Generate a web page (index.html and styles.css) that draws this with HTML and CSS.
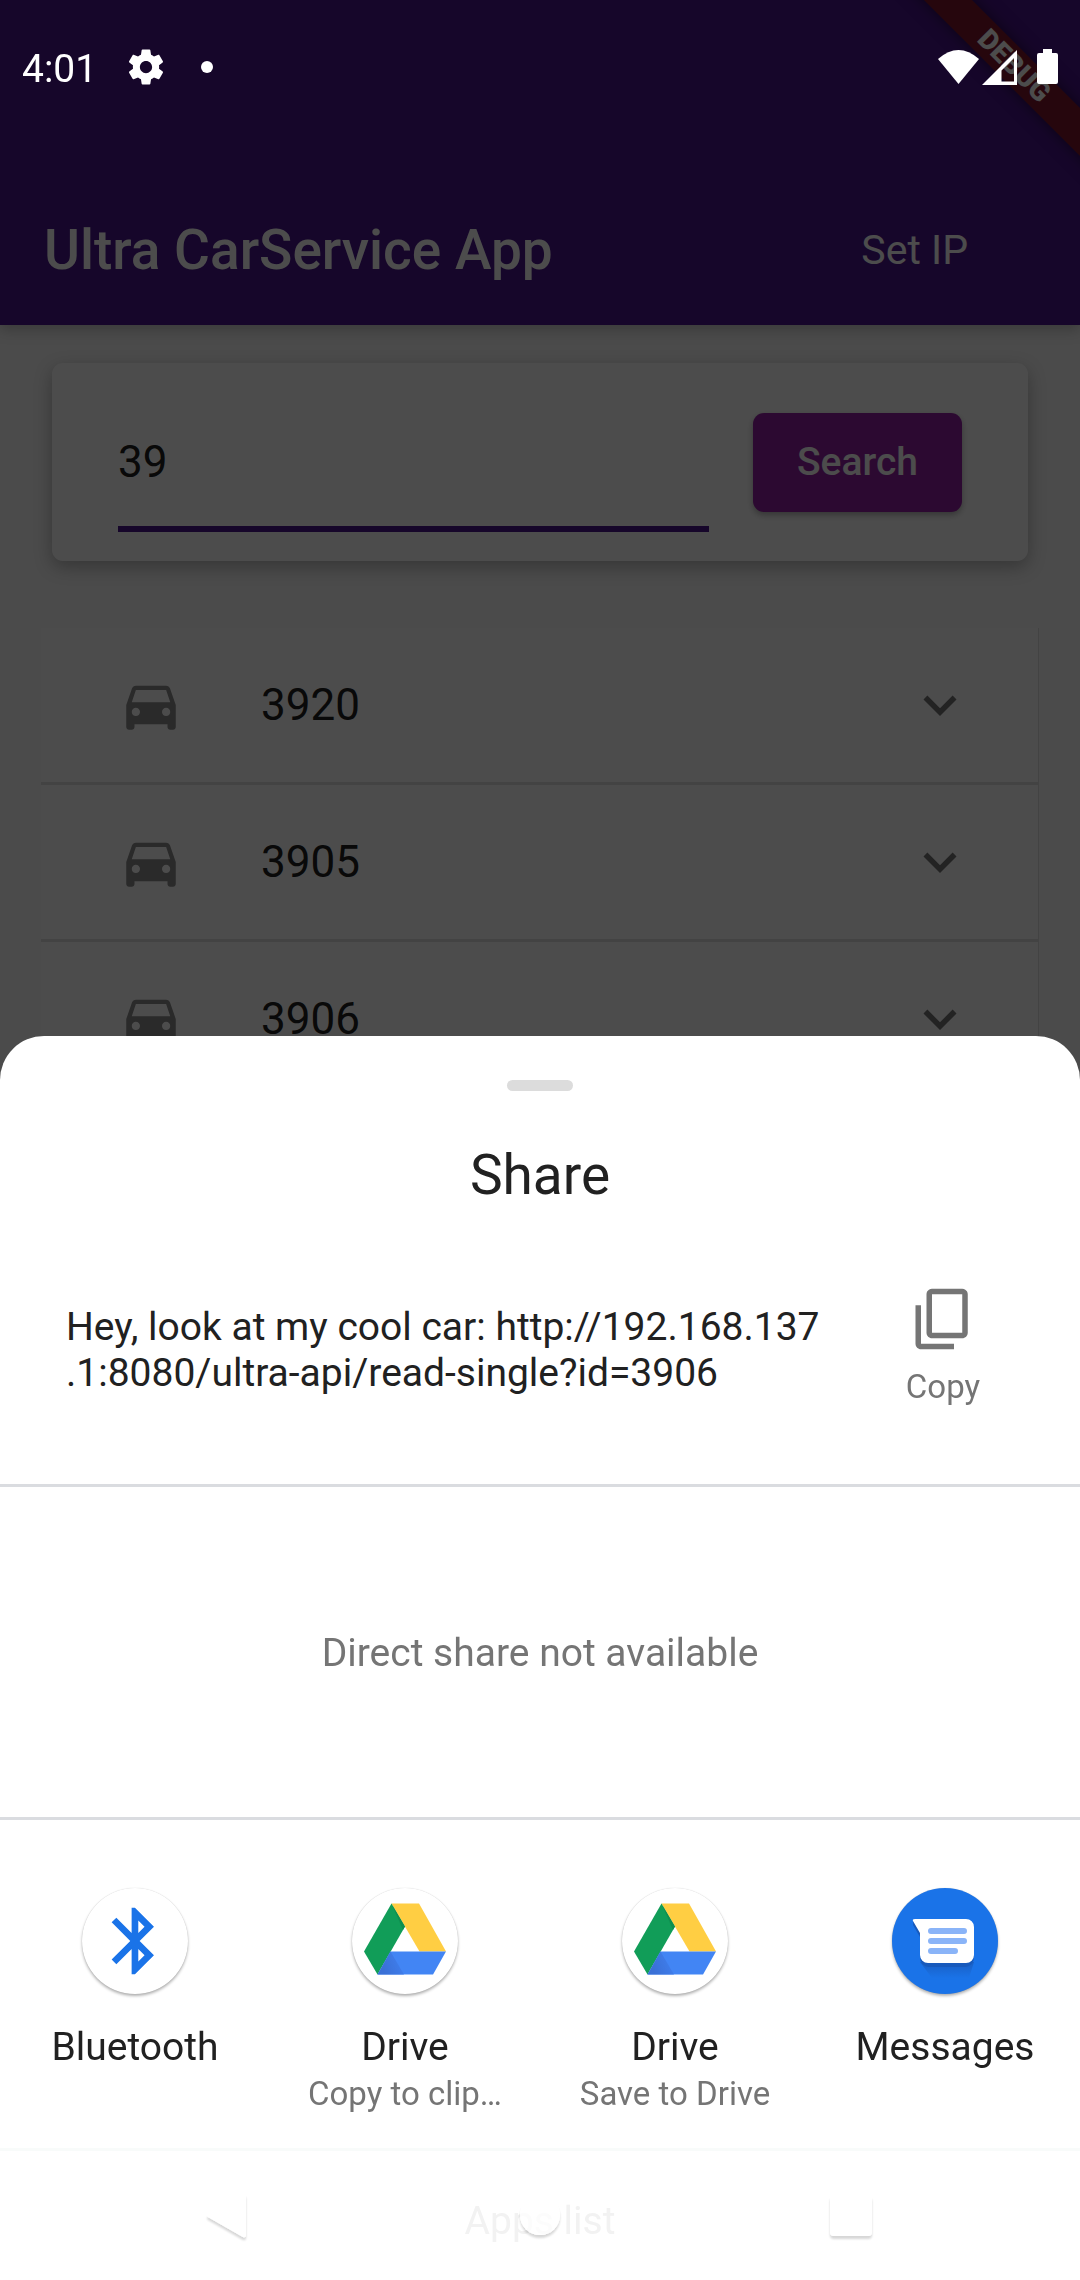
FILE: index.html
```html
<!DOCTYPE html>
<html lang="en">
<head>
<meta charset="utf-8">
<meta name="viewport" content="width=device-width, initial-scale=1">
<title>Ultra CarService App</title>
<link rel="stylesheet" href="styles.css">
</head>
<body>
<svg class="sprite" aria-hidden="true">
  <defs>
    <linearGradient id="facet" gradientUnits="userSpaceOnUse" x1="30" y1="78" x2="50" y2="70"><stop offset="0" stop-color="#3a70d6"/><stop offset="1" stop-color="#407fee"/></linearGradient>
    <filter id="nav-shadow" x="-20%" y="-20%" width="140%" height="150%">
      <feGaussianBlur in="SourceAlpha" stdDeviation="1" result="blur"/>
      <feOffset in="blur" dy="3" result="low"/>
      <feComposite in="low" in2="SourceAlpha" operator="out" result="outside"/>
      <feComponentTransfer in="outside" result="shade"><feFuncA type="linear" slope="0.16"/></feComponentTransfer>
      <feComponentTransfer in="SourceGraphic" result="face"><feFuncA type="linear" slope="0.75"/></feComponentTransfer>
      <feMerge><feMergeNode in="shade"/><feMergeNode in="face"/></feMerge>
    </filter>
  </defs>
  <symbol id="car" viewBox="0 0 24 24"><path d="M18.920 6.010C18.720 5.420 18.160 5 17.500 5h-11c-.66 0-1.210.42-1.420 1.010L3 12v8c0 .55.45 1 1 1h1c.55 0 1-.45 1-1v-1h12v1c0 .55.45 1 1 1h1c.55 0 1-.45 1-1v-8l-2.080-5.990zM6.500 16c-.83 0-1.500-.67-1.500-1.500S5.670 13 6.500 13s1.500.67 1.500 1.500S7.330 16 6.500 16zm11 0c-.83 0-1.500-.67-1.500-1.500s.67-1.500 1.500-1.500 1.500.67 1.500 1.500-.67 1.500-1.500 1.500zM5 11l1.500-4.500h11L19 11H5z"/></symbol>
  <symbol id="chevron" viewBox="0 0 24 24"><path d="M16.590 8.590L12 13.170 7.410 8.590 6 10l6 6 6-6z"/></symbol>
  <symbol id="drive" viewBox="0 0 106 106">
    <path fill="#119d58" d="M39.500 15.500L53 38.500 25.500 86.500 12 63.500z"/>
    <path fill="#ffce43" d="M39.500 15.500h27.500L94 63.500H67.500z"/>
    <path fill="#4285f4" d="M38.500 63.500H94L81 86.500H25.500z"/>
    <path fill="url(#facet)" d="M38.500 63.500L52 86.500H25.500z"/>
    <path fill="#0f8e50" d="M39.500 15.500L53 38.500 51 42z"/>
  </symbol>
</svg>

<div class="app">
  <header class="appbar">
    <h1 class="appbar-title">Ultra CarService App</h1>
    <button class="appbar-action" type="button">Set IP</button>
    <div class="ribbon-corner"><span class="ribbon">DEBUG</span></div>
  </header>
  <main>
    <form class="search-card">
      <input class="search-input" type="text" value="39" aria-label="Car search">
      <button class="search-button" type="button">Search</button>
    </form>
    <ul class="cars">
      <li class="car"><svg class="icon car-icon"><use href="#car"/></svg><span class="car-name">3920</span><svg class="icon chevron"><use href="#chevron"/></svg></li>
      <li class="car"><svg class="icon car-icon"><use href="#car"/></svg><span class="car-name">3905</span><svg class="icon chevron"><use href="#chevron"/></svg></li>
      <li class="car"><svg class="icon car-icon"><use href="#car"/></svg><span class="car-name">3906</span><svg class="icon chevron"><use href="#chevron"/></svg></li>
    </ul>
  </main>
</div>

<div class="scrim"></div>

<div class="statusbar">
  <span class="clock">4:01</span>
  <svg class="gear" viewBox="0 0 24 24"><path fill="#fff" d="M19.430 12.980c.04-.32.07-.64.07-.98s-.03-.66-.07-.98l2.110-1.650c.19-.15.24-.42.12-.64l-2-3.460c-.12-.22-.39-.3-.61-.22l-2.490 1c-.52-.4-1.080-.73-1.690-.98l-.38-2.650C14.460 2.180 14.250 2 14 2h-4c-.25 0-.46.18-.49.42l-.38 2.650c-.61.25-1.170.59-1.690.98l-2.490-1c-.23-.09-.49 0-.61.22l-2 3.460c-.13.22-.07.49.12.64l2.110 1.650c-.04.32-.07.65-.07.98s.03.66.07.98l-2.110 1.650c-.19.15-.24.42-.12.64l2 3.460c.12.22.39.3.61.22l2.490-1c.52.4 1.080.73 1.690.98l.38 2.650c.03.24.24.42.49.42h4c.25 0 .46-.18.49-.42l.38-2.650c.61-.25 1.170-.59 1.690-.98l2.490 1c.23.09.49 0 .61-.22l2-3.460c.12-.22.07-.49-.12-.64l-2.110-1.650zM12 15.500c-1.930 0-3.500-1.570-3.500-3.500s1.570-3.500 3.500-3.500 3.500 1.570 3.500 3.500-1.570 3.500-3.500 3.500z"/></svg>
  <span class="dot"></span>
  <svg class="signals" viewBox="0 0 120 36" fill="#fff">
    <path d="M0 10Q20.500-8 41 10L20.500 35z"/>
    <path fill-rule="evenodd" d="M44 36L79 1V36zM76 9L63.500 21.500V32.500H76z"/>
    <path d="M105 0h9v4h4a2 2 0 0 1 2 2v27a2 2 0 0 1-2 2h-17a2 2 0 0 1-2-2V6a2 2 0 0 1 2-2h4z"/>
  </svg>
</div>

<section class="sheet" aria-labelledby="share-title">
  <span class="handle"></span>
  <h2 class="sheet-title" id="share-title">Share</h2>
  <div class="preview">
    <p class="preview-text">Hey, look at my cool car: http://192.168.137<wbr>.1:8080/ultra-api/read-single?id=3906</p>
    <button class="copy" type="button">
      <svg class="icon" viewBox="0 0 24 24" fill="#757575"><path d="M16 21H4V7H2v14c0 1.100.9 2 2 2h12v-2zm3-20H8c-1.100 0-2 .9-2 2v14c0 1.100.9 2 2 2h11c1.100 0 2-.9 2-2V3c0-1.100-.9-2-2-2zm0 16H8V3h11v14z"/></svg>
      <span>Copy</span>
    </button>
  </div>
  <p class="direct">Direct share not available</p>
  <div class="targets">
    <button class="target" type="button">
      <svg class="target-icon" viewBox="0 0 106 106"><path fill="#1a73e8" transform="translate(13 13) scale(3.33)" d="M17.710 7.710L12 2h-1v7.590L6.410 5 5 6.410 10.590 12 5 17.590 6.410 19 11 14.410V22h1l5.710-5.710-4.300-4.290 4.300-4.290zM13 5.830l1.880 1.880L13 9.590V5.830zm1.880 10.460L13 18.170v-3.760l1.880 1.880z"/></svg>
      <span class="target-name">Bluetooth</span>
    </button>
    <button class="target" type="button">
      <svg class="target-icon"><use href="#drive"/></svg>
      <span class="target-name">Drive</span>
      <span class="target-note">Copy to clip…</span>
    </button>
    <button class="target" type="button">
      <svg class="target-icon"><use href="#drive"/></svg>
      <span class="target-name">Drive</span>
      <span class="target-note">Save to Drive</span>
    </button>
    <button class="target" type="button">
      <svg class="target-icon target-messages" viewBox="0 0 106 106">
        <defs><linearGradient id="fade" x1="0" y1="0" x2="0" y2="1"><stop offset="0" stop-color="#195fc4"/><stop offset="1" stop-color="#1a73e8"/></linearGradient></defs>
        <path fill="url(#fade)" d="M28 74h54l-5 16H40z"/>
        <path fill="#185abc" d="M21 33v4l7 12v21a9 9 0 0 0 9 9h36a9 9 0 0 0 9-9V44z"/>
        <path fill="#fff" d="M23 31h51a8 8 0 0 1 8 8v28a8 8 0 0 1-8 8H36a8 8 0 0 1-8-8V45l-7-12q-1-2 2-2z"/>
        <path stroke="#8ab4f8" stroke-width="6" stroke-linecap="round" d="M39 43h33M39 53h33M39 63h24"/>
      </svg>
      <span class="target-name">Messages</span>
    </button>
  </div>
  <p class="apps-list">Apps list</p>
</section>

<nav class="navbar" aria-label="System">
  <svg class="nav-icon" viewBox="0 0 48 52"><path filter="url(#nav-shadow)" d="M39 4q3-1 3 2v39q0 3-3 2L4 27q-2-2 0-3z"/></svg>
  <svg class="nav-icon" viewBox="0 0 48 52"><circle filter="url(#nav-shadow)" cx="24" cy="25" r="20"/></svg>
  <svg class="nav-icon" viewBox="0 0 48 52"><rect filter="url(#nav-shadow)" x="2" y="5" width="42" height="41" rx="4"/></svg>
</nav>
</body>
</html>
```
FILE: styles.css
```css
* { box-sizing: border-box; }

body {
  margin: 0;
  background: #fafafa;
  color: #212121;
  font-family: Roboto, "Noto Sans", sans-serif;
  font-size: 39px;
}

button {
  border: 0;
  padding: 0;
  background: none;
  color: inherit;
  font: inherit;
}

h1, h2, p, ul { margin: 0; padding: 0; }

.sprite { position: absolute; width: 0; height: 0; }
.icon { flex: none; width: 66px; height: 66px; }

/* App behind the sheet */
.app {
  height: 100vh;
  overflow: hidden;
}

.appbar {
  position: relative;
  display: flex;
  align-items: center;
  justify-content: space-between;
  padding: 174px 112px 0 44px;
  height: 325px;
  background: #4a148c;
  color: #fff;
  box-shadow: 0 4px 14px rgba(0, 0, 0, .25);
}

.appbar-title {
  font-size: 55px;
  font-weight: 500;
}

.appbar-action { font-size: 41px; }

.ribbon-corner {
  position: absolute;
  top: 0;
  right: 0;
  width: 200px;
  height: 200px;
  overflow: hidden;
}

.ribbon {
  position: absolute;
  top: 49px;
  right: -84px;
  width: 300px;
  height: 34px;
  transform: rotate(45deg);
  background: #80152c;
  box-shadow: 0 0 16px rgba(0, 0, 0, .5);
  font-size: 28px;
  font-weight: 900;
  line-height: 34px;
  text-align: center;
}

.search-card {
  display: flex;
  align-items: center;
  gap: 44px;
  margin: 38px 52px 0;
  padding: 0 66px;
  height: 198px;
  border-radius: 11px;
  background: #fff;
  box-shadow: 0 6px 18px rgba(0, 0, 0, .28);
}

.search-input {
  flex: 1;
  min-width: 0;
  height: 138px;
  margin-top: 2px;
  padding: 4px 0 0;
  border: 0;
  border-bottom: 6px solid #4a148c;
  border-radius: 0;
  outline: 0;
  background: none;
  color: #212121;
  font: inherit;
  font-size: 44px;
}

.search-button {
  width: 209px;
  height: 99px;
  border-radius: 11px;
  background: #9321a3;
  box-shadow: 0 3px 6px rgba(0, 0, 0, .3);
  color: #fff;
  font-weight: 500;
}

.cars {
  margin: 67px 41px 0;
  list-style: none;
  background: #fff;
  border-right: 1px solid #e0e0e0;
}

.car {
  display: flex;
  align-items: center;
  gap: 77px;
  height: 157px;
  padding: 0 65px 0 77px;
  border-bottom: 3px solid #e0e0e0;
  font-size: 44px;
}

.car-icon { fill: #8c8c8c; }
.car-name { flex: 1; }
.chevron { fill: #757575; }

.scrim {
  position: fixed;
  inset: 0;
  background: rgba(0, 0, 0, .7);
}

/* System status bar */
.statusbar {
  position: fixed;
  top: 0;
  left: 0;
  right: 0;
  display: flex;
  align-items: center;
  height: 134px;
  padding: 0 22px;
  color: #fff;
}

.clock { margin-top: 4px; }
.gear { width: 42px; height: 42px; margin-left: 28px; }
.dot { width: 12px; height: 12px; margin-left: 34px; border-radius: 50%; background: #fff; }
.signals { width: 120px; height: 36px; margin-left: auto; }

/* Share sheet */
.sheet {
  position: fixed;
  left: 0;
  right: 0;
  bottom: 0;
  display: flex;
  flex-direction: column;
  border-radius: 44px 44px 0 0;
  background: #fff;
}

.handle {
  align-self: center;
  width: 66px;
  height: 11px;
  margin-top: 44px;
  border-radius: 6px;
  background: #dcdcdc;
}

.sheet-title {
  margin-top: 52px;
  font-size: 55px;
  font-weight: 400;
  line-height: 64px;
  text-align: center;
}

.preview {
  display: flex;
  align-items: center;
  justify-content: space-between;
  height: 280px;
  padding: 8px 92px 0 66px;
  border-bottom: 3px solid #dadce0;
}

.preview-text { line-height: 46px; }

.copy {
  display: flex;
  flex: none;
  flex-direction: column;
  align-items: center;
  gap: 15px;
  width: 90px;
  margin-bottom: 6px;
  color: #757575;
  font-size: 33px;
  line-height: 40px;
}

.direct {
  height: 333px;
  border-bottom: 3px solid #dadce0;
  color: #757575;
  line-height: 332px;
  text-align: center;
}

.targets {
  display: grid;
  grid-template-columns: repeat(4, 1fr);
  height: 331px;
  padding-top: 68px;
  border-bottom: 3px solid #f8fbfa;
}

.target {
  display: flex;
  flex-direction: column;
  align-items: center;
}

.target-icon {
  width: 106px;
  height: 106px;
  border-radius: 50%;
  background: #fff;
  box-shadow: 0 2px 3px rgba(0, 0, 0, .3), 0 0 1px rgba(0, 0, 0, .2);
}

.target-messages { background: #1a73e8; }

.target-name {
  margin-top: 30px;
  line-height: 46px;
}

.target-note {
  color: #757575;
  font-size: 33px;
  line-height: 48px;
}

.apps-list {
  height: 129px;
  padding-top: 47px;
  color: #f2f2f2;
  line-height: 46px;
  text-align: center;
}

/* System navigation buttons */
.navbar {
  position: fixed;
  left: 0;
  right: 0;
  bottom: 0;
  display: flex;
  justify-content: center;
  gap: 264px;
  height: 132px;
  padding-top: 42px;
}

.nav-icon {
  width: 48px;
  height: 52px;
  fill: #fff;
}
```
